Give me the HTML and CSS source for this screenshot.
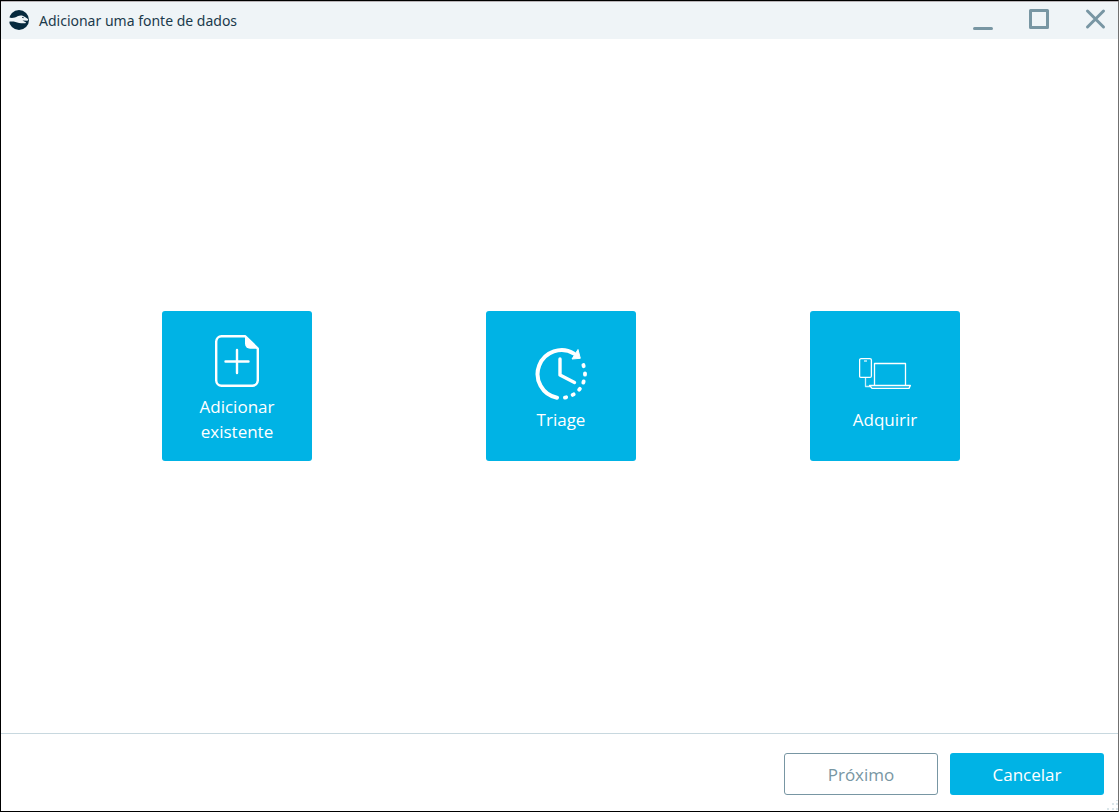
FILE: index.html
```html
<!DOCTYPE html>
<html lang="pt-BR">
<head>
<meta charset="utf-8">
<meta name="viewport" content="width=device-width, initial-scale=1">
<title>Adicionar uma fonte de dados</title>
<link rel="stylesheet" href="styles.css">
</head>
<body>
<div class="window">
  <header class="titlebar">
    <svg class="logo" viewBox="0 0 20 20" aria-hidden="true">
      <circle cx="10" cy="10" r="10" fill="#06293d"/>
      <path d="M-1 7.300C3 8.600 6 7.800 8.500 6.300C11 4.900 14 5.200 16 7L19.300 9.200L18.600 10.800L13.500 10.600C14.500 11.500 15.800 12 17 12.300L16.400 13.300C12 13.600 9 12.600 6.500 11.900C4 11.300 1.500 11.300 -1 11.900Z" fill="#eff4f7"/>
      <path d="M13 7.400L14.800 7.700" stroke="#06293d" stroke-width="0.800"/>
    </svg>
    <h1 class="title">Adicionar uma fonte de dados</h1>
    <div class="controls">
      <button class="control" type="button" aria-label="Minimizar">
        <svg viewBox="0 0 20 20"><path d="M1.500 19.500H18.500" stroke-width="3"/></svg>
      </button>
      <button class="control" type="button" aria-label="Maximizar">
        <svg viewBox="0 0 20 20"><rect x="1.500" y="1.500" width="17" height="17" stroke-width="3"/></svg>
      </button>
      <button class="control" type="button" aria-label="Fechar">
        <svg viewBox="0 0 20 20"><path d="M2.500 2L18.500 18M18.500 2L2.500 18" stroke-width="3"/></svg>
      </button>
    </div>
  </header>

  <main class="sources">
    <button class="tile" type="button">
      <svg class="tile-icon" viewBox="0 0 52 52" aria-hidden="true">
        <path d="M34 1.200H10.500A5.500 5.500 0 0 0 5.200 6.500V45.500A5.500 5.500 0 0 0 10.500 50.800H41.500A5.500 5.500 0 0 0 46.800 45.500V13.500Z" fill="none" stroke="#fff" stroke-width="2.400" stroke-linejoin="round"/>
        <path d="M34 1L47 13.700H39A5 5 0 0 1 34 8.700Z" fill="#fff"/>
        <path d="M26 15V38M14.500 26.500H37.500" stroke="#fff" stroke-width="2.400" stroke-linecap="round"/>
      </svg>
      <span class="label">Adicionar existente</span>
    </button>
    <button class="tile" type="button">
      <svg class="tile-icon" viewBox="0 0 52 52" aria-hidden="true">
        <path d="M22 49.700A24 24 0 1 1 39 5.600" fill="none" stroke="#fff" stroke-width="4" stroke-linecap="round"/>
        <path d="M43 1.500L45.300 10.300L37 11Z" fill="#fff" stroke="#fff" stroke-width="1" stroke-linejoin="round"/>
        <path d="M25 11V27L39.500 34.500" fill="none" stroke="#fff" stroke-width="3.400" stroke-linecap="round" stroke-linejoin="round"/>
        <path d="M48.400 17L48.700 18.200M50 25.300V26.700M48.700 33.400L48.300 34.600M44.900 40.800L44.100 41.700M38.700 46.300L37.600 46.900M31.200 49.300L29.900 49.600" stroke="#fff" stroke-width="3.800" stroke-linecap="round"/>
      </svg>
      <span class="label">Triage</span>
    </button>
    <button class="tile" type="button">
      <svg class="tile-icon" viewBox="0 0 52 52" aria-hidden="true" fill="none" stroke="#fff" stroke-width="1.300" stroke-linejoin="round">
        <rect x="0.600" y="10.600" width="11.800" height="18.800" rx="1.500"/>
        <path d="M5 13H8" stroke-width="1.400" opacity="0.800"/>
        <path d="M6.500 29.500V38.500H11" opacity="0.800"/>
        <path d="M15.500 37V15.500H46.500V37"/>
        <path d="M10.600 37.500H51.400L50 40.400H13Z"/>
      </svg>
      <span class="label">Adquirir</span>
    </button>
  </main>

  <footer class="actions">
    <button class="action action-next" type="button">Próximo</button>
    <button class="action action-cancel" type="button">Cancelar</button>
  </footer>
  <svg class="grip" viewBox="0 0 11 11" aria-hidden="true">
    <path d="M0 8h2v2h-2zM5 8h2v2h-2zM9 8h2v2h-2zM5 3h2v2h-2zM9 3h2v2h-2zM9 0h2v1h-2z" fill="#dbe6ea"/>
  </svg>
</div>
</body>
</html>
```
FILE: styles.css
```css
* {
  box-sizing: border-box;
}

body {
  margin: 0;
  background: #000;
  font-family: "Open Sans", "Noto Sans", sans-serif;
}

button {
  margin: 0;
  padding: 0;
  border: 0;
  font: inherit;
  cursor: pointer;
}

.window {
  position: relative;
  display: flex;
  flex-direction: column;
  min-height: 100vh;
  border: 1px solid #000;
  border-right-color: #707070;
  background: #fff;
}

.titlebar {
  display: flex;
  align-items: center;
  height: 38px;
  padding: 0 13px 0 8px;
  border-top: 1px solid #b9b4b8;
  border-bottom: 1px solid #eff4f7;
  background: #eff4f7;
}

.logo {
  width: 20px;
  height: 20px;
  margin-right: 10px;
}

.title {
  margin: 0;
  padding-top: 2px;
  color: #1b3a4c;
  font-family: "Noto Sans", "Open Sans", sans-serif;
  font-size: 14px;
  font-weight: 400;
  line-height: 20px;
}

.controls {
  display: flex;
  gap: 36px;
  margin-left: auto;
  padding-bottom: 2px;
}

.control {
  width: 20px;
  height: 20px;
  background: none;
}

.control svg {
  display: block;
  overflow: visible;
  fill: none;
  stroke: #7896a3;
  stroke-linecap: round;
  stroke-linejoin: round;
}

.sources {
  flex: 1;
  display: grid;
  grid-template-columns: repeat(3, 1fr);
  place-items: center;
  padding: 0 71px 0 74px;
}

.tile {
  display: flex;
  flex-direction: column;
  align-items: center;
  justify-content: center;
  width: 150px;
  height: 150px;
  padding: 0 24px;
  border-radius: 3px;
  background: #00b3e5;
  color: #fff;
}

.tile-icon {
  width: 52px;
  height: 52px;
  margin: 7px 0;
}

.label {
  font-size: 17px;
  font-weight: 400;
  line-height: 25px;
}

.actions {
  display: flex;
  justify-content: flex-end;
  gap: 12px;
  padding: 19px 14px 16px;
  border-top: 1px solid #c8d8df;
}

.action {
  width: 154px;
  height: 42px;
  border-radius: 3px;
  font-size: 17px;
  font-weight: 400;
}

.action-next {
  border: 1px solid #7896a3;
  background: #fff;
  color: #7896a3;
}

.action-cancel {
  background: #00b3e5;
  color: #fff;
}

.grip {
  position: absolute;
  right: 0;
  bottom: 0;
  width: 11px;
  height: 11px;
}
```
